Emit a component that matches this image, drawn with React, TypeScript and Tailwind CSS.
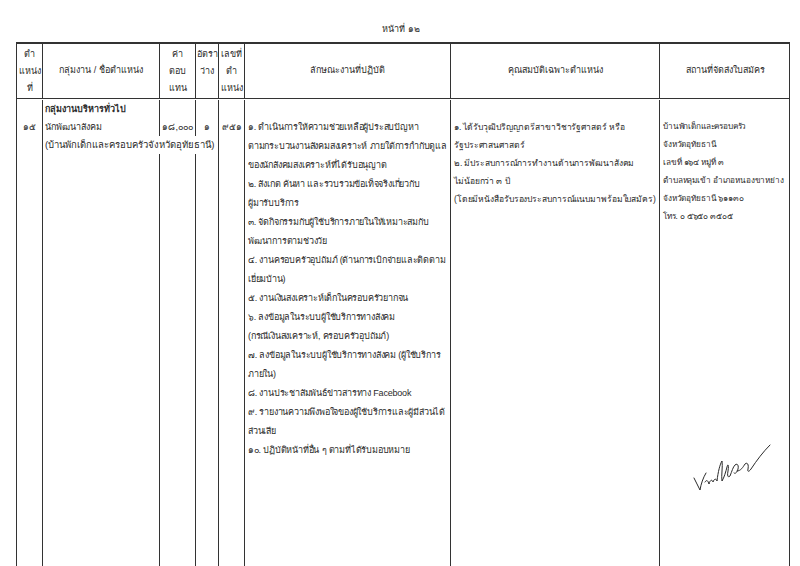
const duties = [
  "๑. ดำเนินการให้ความช่วยเหลือผู้ประสบปัญหา",
  "ตามกระบวนงานสังคมสงเคราะห์ ภายใต้การกำกับดูแล",
  "ของนักสังคมสงเคราะห์ที่ได้รับอนุญาต",
  "๒. สังเกต ค้นหา และรวบรวมข้อเท็จจริงเกี่ยวกับ",
  "ผู้มารับบริการ",
  "๓. จัดกิจกรรมกับผู้ใช้บริการภายในให้เหมาะสมกับ",
  "พัฒนาการตามช่วงวัย",
  "๔. งานครอบครัวอุปถัมภ์ (ด้านการเบิกจ่ายและติดตาม",
  "เยี่ยมบ้าน)",
  "๕. งานเงินสงเคราะห์เด็กในครอบครัวยากจน",
  "๖. ลงข้อมูลในระบบผู้ใช้บริการทางสังคม",
  "(กรณีเงินสงเคราะห์, ครอบครัวอุปถัมภ์)",
  "๗. ลงข้อมูลในระบบผู้ใช้บริการทางสังคม (ผู้ใช้บริการ",
  "ภายใน)",
  "๘. งานประชาสัมพันธ์ข่าวสารทาง Facebook",
  "๙. รายงานความพึงพอใจของผู้ใช้บริการและผู้มีส่วนได้",
  "ส่วนเสีย",
  "๑๐. ปฏิบัติหน้าที่อื่น ๆ ตามที่ได้รับมอบหมาย",
];

const qualifications = [
  "๑. ได้รับวุฒิปริญญาตรีสาขาวิชารัฐศาสตร์ หรือ",
  "รัฐประศาสนศาสตร์",
  "๒. มีประสบการณ์การทำงานด้านการพัฒนาสังคม",
  "ไม่น้อยกว่า ๓ ปี",
  "(โดยมีหนังสือรับรองประสบการณ์แนบมาพร้อมใบสมัคร)",
];

const address = [
  "บ้านพักเด็กและครอบครัว",
  "จังหวัดอุทัยธานี",
  "เลขที่ ๑๖๔ หมู่ที่ ๓",
  "ตำบลหลุมเข้า อำเภอหนองขาหย่าง",
  "จังหวัดอุทัยธานี ๖๑๑๓๐",
  "โทร. ๐ ๕๖๕๐ ๓๕๐๕",
];

const cols = "grid grid-cols-[25px_117px_36px_23px_26px_206px_209px_131px]";

export default function App() {
  return (
    <div className="w-[800px] h-[566px] overflow-hidden bg-white text-[#2b2b2b] font-['Liberation_Sans',sans-serif] text-[9px]">
      {/* Page number */}
      <div className="h-[42px] flex items-end justify-center pb-[6px]">
        <span className="ml-[2px]">หน้าที่ ๑๒</span>
      </div>

      <div className="ml-[16px] w-[774px] border-l border-r border-t-2 border-[#333]">
        {/* Header */}
        <div className={`${cols} h-[55px] border-b border-[#333] text-center`}>
          <div className="flex flex-col justify-center leading-[17px]">
            <span>ตำ</span>
            <span>แหน่ง</span>
            <span>ที่</span>
          </div>
          <div className="border-l border-[#333] flex items-center justify-center">
            กลุ่มงาน / ชื่อตำแหน่ง
          </div>
          <div className="border-l border-[#333] flex flex-col justify-center leading-[17px]">
            <span>ค่า</span>
            <span>ตอบ</span>
            <span>แทน</span>
          </div>
          <div className="border-l border-[#333] flex flex-col leading-[17px] pt-[2px]">
            <span>อัตรา</span>
            <span>ว่าง</span>
          </div>
          <div className="border-l border-[#333] flex flex-col justify-center leading-[17px]">
            <span>เลขที่</span>
            <span>ตำ</span>
            <span>แหน่ง</span>
          </div>
          <div className="border-l border-[#333] flex items-center justify-center">
            ลักษณะงานที่ปฏิบัติ
          </div>
          <div className="border-l border-[#333] flex items-center justify-center">
            คุณสมบัติเฉพาะตำแหน่ง
          </div>
          <div className="border-l border-[#333] flex items-center justify-center">
            สถานที่จัดส่งใบสมัคร
          </div>
        </div>

        {/* Body */}
        <div className={`${cols} h-[480px] leading-[18px] pt-[1px]`}>
          <div className="pt-[18px] text-center">๑๕</div>
          <div className="border-l border-[#333] pl-[2px] relative z-10">
            <div className="font-bold">กลุ่มงานบริหารทั่วไป</div>
            <div>นักพัฒนาสังคม</div>
            <div className="whitespace-nowrap bg-white w-max pr-[3px] text-[9.5px]">
              (บ้านพักเด็กและครอบครัวจังหวัดอุทัยธานี)
            </div>
          </div>
          <div className="border-l border-[#333] pt-[18px] text-right pr-[2px]">๑๘,๐๐๐</div>
          <div className="border-l border-[#333] pt-[18px] text-center">๑</div>
          <div className="border-l border-[#333] pt-[18px] text-center">๙๕๑</div>
          <div className="border-l border-[#333] pt-[18px] pl-[3px] leading-[19px] whitespace-nowrap tracking-[-0.2px]">
            {duties.map((line) => (
              <div key={line}>{line}</div>
            ))}
          </div>
          <div className="border-l border-[#333] pt-[18px] pl-[3px] whitespace-nowrap text-[8.5px] tracking-[-0.1px]">
            {qualifications.map((line) => (
              <div key={line}>{line}</div>
            ))}
          </div>
          <div className="border-l border-[#333] pt-[18px] pl-[3px] whitespace-nowrap relative text-[8.2px] tracking-[-0.15px]">
            {address.map((line) => (
              <div key={line}>{line}</div>
            ))}
            {/* signature */}
            <svg
              className="absolute left-[32px] top-[340px]"
              width="80"
              height="56"
              viewBox="0 0 80 56"
              fill="none"
              stroke="#2b2b2b"
              strokeWidth="1"
              strokeLinecap="round"
              strokeLinejoin="round"
            >
              <path d="M2 38 C4 42 6 46 8 50 C9 44 11 38 14 33 M13 42 C15 39 16 41 17 44 C18 40 20 39 21 42 C22 39 24 38 25 41 C26 32 28 24 30 21 C31 26 29 36 30 41 C32 38 34 31 35 27 C36 23 37 25 36 31 C35 36 36 38 38 36 C40 31 41 27 43 25 C45 23 47 25 46 29 C45 33 43 34 42 33 M45 31 C49 31 51 27 53 24 C55 22 57 24 56 29 C55 32 57 32 59 29 C65 20 71 12 78 5" />
            </svg>
          </div>
        </div>
      </div>
    </div>
  );
}
